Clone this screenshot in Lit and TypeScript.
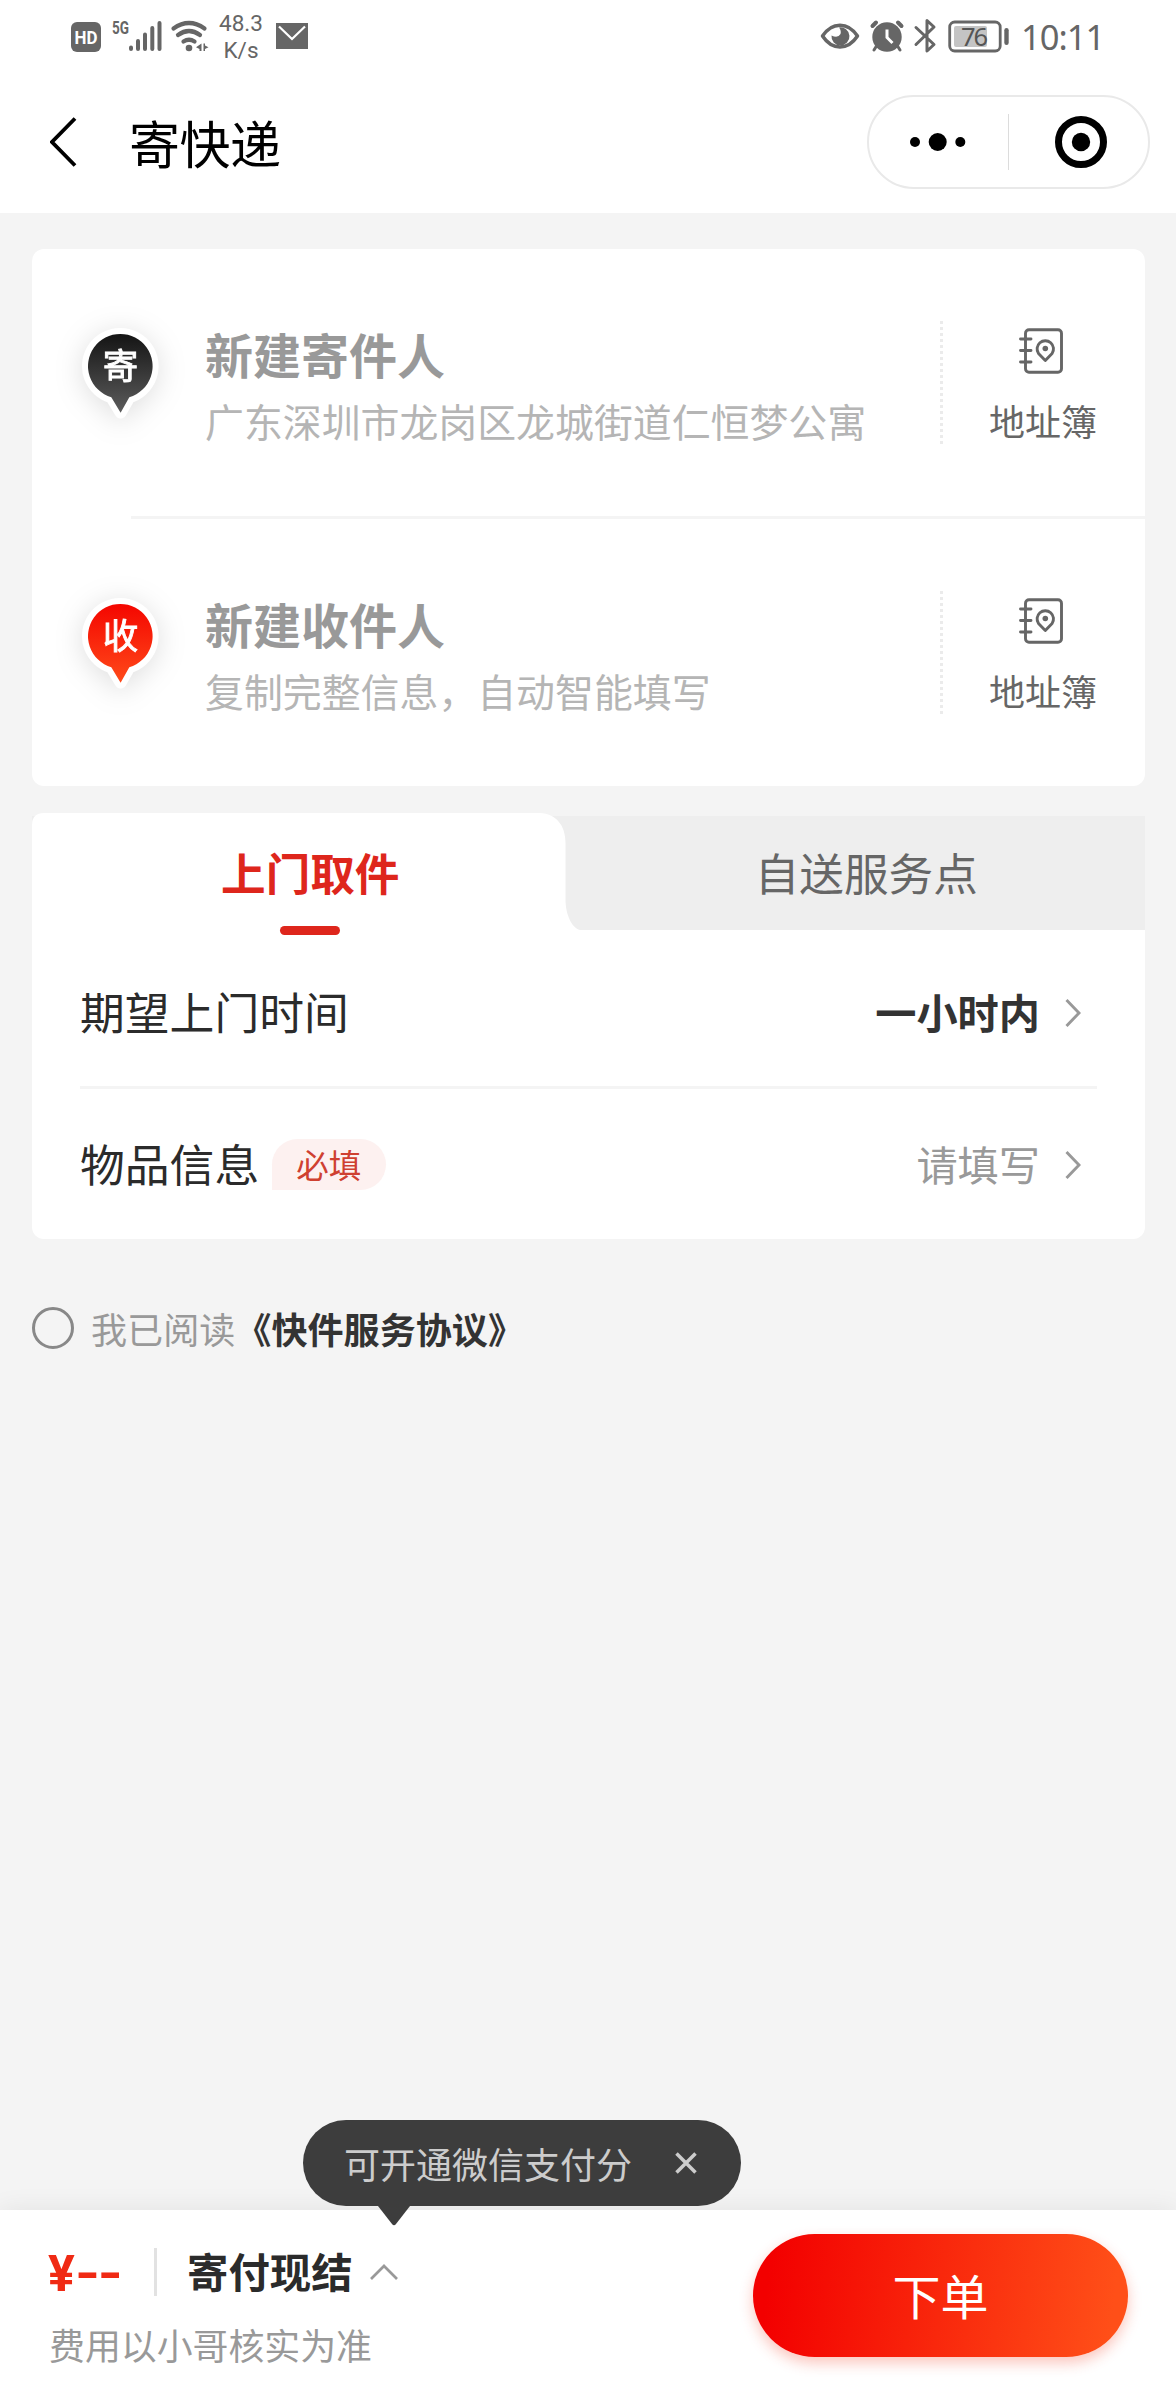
import { LitElement, html, svg, css } from "lit";
import { customElement, property } from "lit/decorators.js";

const fontStack = css`"Noto Sans CJK SC", "Noto Sans", sans-serif`;

/* ---------- Status bar ---------- */
@customElement("status-bar")
class StatusBar extends LitElement {
  static styles = css`
    :host {
      display: flex;
      height: 75px;
      box-sizing: border-box;
      padding: 0 77px 0 71px;
      justify-content: space-between;
      color: #666;
      font-family: Roboto, sans-serif;
    }
    .group { display: flex; align-items: flex-start; }
    svg { display: block; flex: none; }
    .speed {
      width: 44px;
      margin: 10px 0 0 10px;
      font-size: 22.5px;
      line-height: 27px;
      text-align: center;
      white-space: nowrap;
    }
    .mail { margin-left: 13px; }
    .clock {
      margin: 13px 0 0 12px;
      font-family: "Noto Sans", sans-serif;
      font-size: 34.5px;
      line-height: 48px;
      letter-spacing: -1px;
      width: 78px;
      white-space: nowrap;
    }
  `;

  render() {
    return html`
      <div class="group">
        <svg width="138" height="75" viewBox="71 0 138 75" fill="#666">
          <rect x="71" y="22" width="30" height="30" rx="6" />
          <text x="86" y="44" font-size="18" font-weight="700" fill="#fff" text-anchor="middle" textLength="23" lengthAdjust="spacingAndGlyphs">HD</text>
          <text x="112" y="34" font-size="18" font-weight="700" textLength="17" lengthAdjust="spacingAndGlyphs">5G</text>
          <g stroke="#666" stroke-width="4" stroke-linecap="round">
            <path d="M131 47.5V49M138 41V49M145 34.5V49M152.300 28V49M159.500 23V49" />
          </g>
          <g fill="none" stroke="#666" stroke-width="4.200" stroke-linecap="round">
            <path d="M173.500 28.500Q189 17.500 204.500 28.500" />
            <path d="M178 35Q189 27 200 35" />
            <path d="M183.500 41.500Q189 38 194.500 41.500" />
          </g>
          <circle cx="189" cy="48" r="3.300" />
          <path d="M201.500 43.500V51H199.500V49L196 47.300ZM203.500 43.500H205V45.500L208.500 47.200L205 49V51H203.500Z" />
        </svg>
        <div class="speed">48.3<br />K/s</div>
        <svg class="mail" width="32" height="75" viewBox="276 0 32 75">
          <rect x="276" y="23" width="32" height="26" fill="#666" />
          <path d="M279 26.500L292 39L305 26.500" fill="none" stroke="#fff" stroke-width="2.200" />
        </svg>
      </div>
      <div class="group">
        <svg width="189" height="75" viewBox="820 0 189 75" fill="none" stroke="#666">
          <path d="M822.500 36C832 21.500 848 21.500 857.500 36C848 50.500 832 50.500 822.500 36Z" stroke-width="3.500" stroke-linejoin="round" />
          <path d="M839 27.500A9 9 0 1 1 831.500 35.500Q838 38.500 840.500 34Q841.500 30.500 839 27.500Z" fill="#666" stroke="none" />
          <circle cx="887" cy="37" r="14.700" fill="#666" stroke="none" />
          <path d="M872.500 26L876 22.500M898 22.500L901.500 26" stroke-width="4" stroke-linecap="round" />
          <path d="M876.500 46L874 50M897.500 46L900 50" stroke-width="3" stroke-linecap="round" />
          <path d="M887 29.500V37.500L892.500 43" stroke="#fff" stroke-width="3" />
          <path d="M916 27.500L934 44.500L927 51V20.500L934 27L916 44.500" stroke-width="3" stroke-linejoin="round" stroke-linecap="round" />
          <rect x="949.700" y="22" width="50.500" height="29" rx="5" stroke-width="2.800" />
          <rect x="954" y="26" width="33" height="21" rx="2" fill="#c4c4c4" stroke="none" />
          <rect x="1004.300" y="28" width="4.400" height="17" rx="2.200" fill="#666" stroke="none" />
          <text x="974.500" y="45.500" font-family="Noto Sans" font-size="25.500" fill="#555" stroke="none" text-anchor="middle" textLength="27">76</text>
        </svg>
        <div class="clock">10:11</div>
      </div>
    `;
  }
}

/* ---------- Navigation bar ---------- */
@customElement("nav-bar")
class NavBar extends LitElement {
  static styles = css`
    :host {
      display: flex;
      height: 138px;
      box-sizing: border-box;
      padding: 20px 26px 24px 50px;
      align-items: center;
      justify-content: space-between;
      font-family: ${fontStack};
    }
    .left { display: flex; align-items: center; }
    svg { display: block; }
    .title {
      margin-left: 51px;
      margin-top: -1px;
      font-size: 51px;
      line-height: 70px;
      letter-spacing: -0.5px;
      color: #000;
    }
    .capsule {
      box-sizing: border-box;
      width: 283px;
      height: 94px;
      border: 2px solid #e9e9e9;
      border-radius: 47px;
      display: flex;
      align-items: center;
      justify-content: space-between;
      padding: 0 41px;
    }
    .line { width: 1px; height: 56px; background: #dcdcdc; margin-right: 4px; }
  `;

  render() {
    return html`
      <div class="left">
        <svg width="28" height="50" viewBox="0 0 28 50" fill="none" stroke="#000" stroke-width="3.800">
          <path d="M25 1.500L2 25L25 48.500" />
        </svg>
        <div class="title">寄快递</div>
      </div>
      <div class="capsule">
        <svg width="56" height="20" viewBox="0 0 56 20">
          <circle cx="5" cy="10" r="5" /><circle cx="27.700" cy="10" r="9" /><circle cx="50.300" cy="10" r="5" />
        </svg>
        <div class="line"></div>
        <svg width="52" height="52" viewBox="0 0 52 52">
          <circle cx="26" cy="26" r="22.500" fill="none" stroke="#000" stroke-width="7" />
          <circle cx="26" cy="26" r="9.200" />
        </svg>
      </div>
    `;
  }
}

/* ---------- Address row ---------- */
@customElement("address-row")
class AddressRow extends LitElement {
  @property() mark = "";
  @property() heading = "";
  @property() detail = "";
  @property() top = "";
  @property() bottom = "";

  static styles = css`
    :host {
      display: flex;
      height: 267px;
      align-items: flex-start;
      font-family: ${fontStack};
    }
    svg { display: block; flex: none; }
    .pin { filter: drop-shadow(0 4px 14px rgba(0, 0, 0, 0.13)); }
    .info { flex: 1; padding-top: 74px; white-space: nowrap; }
    .heading { font-size: 48px; line-height: 60px; font-weight: 700; color: #999; }
    .detail { margin-top: 12px; font-size: 38.9px; line-height: 50px; color: #b5b5b5; }
    .dots {
      width: 3px;
      height: 123px;
      margin-top: 72px;
      background: repeating-linear-gradient(#ebebeb 0 3px, transparent 3px 6px);
    }
    .book {
      box-sizing: border-box;
      width: 202px;
      padding-top: 79px;
      padding-right: 2px;
      display: flex;
      flex-direction: column;
      align-items: center;
      gap: 24px;
      font-size: 36px;
      line-height: 44px;
      color: #666;
    }
    .book svg { margin-right: 5px; }
  `;

  render() {
    return html`
      <svg class="pin" width="173" height="200" viewBox="0.700 0 173 200">
        <defs>
          <linearGradient id="fill" x1="0" y1="0" x2="0" y2="1">
            <stop offset="0" stop-color=${this.top} />
            <stop offset="1" stop-color=${this.bottom} />
          </linearGradient>
        </defs>
        <path
          d="M80 148.200A32.300 32.300 0 1 1 98 148.200L89.300 163.500Z"
          fill="#fff" stroke="#fff" stroke-width="12" stroke-linejoin="round"
        />
        <path d="M80 148.200A32.300 32.300 0 1 1 98 148.200L89.300 163.700Z" fill="url(#fill)" />
        <text x="89.300" y="129.500" font-size="35.500" fill="#fff" stroke="#fff" stroke-width="0.900" text-anchor="middle">${this.mark}</text>
      </svg>
      <div class="info">
        <div class="heading">${this.heading}</div>
        <div class="detail">${this.detail}</div>
      </div>
      <div class="dots"></div>
      <div class="book">
        <svg width="44" height="46" viewBox="0 0 44 46" fill="none" stroke="#666" stroke-width="2.900" stroke-linecap="round">
          <rect x="6.500" y="1.700" width="36" height="42.500" rx="3.500" />
          <path d="M1.500 11H12M1.500 22.500H12M1.500 34H12" />
          <path d="M26.300 32.500L19.500 25.500A8.200 8.200 0 1 1 33.100 25.500Z" stroke-linejoin="round" />
          <circle cx="26.300" cy="20.500" r="2.800" fill="#666" stroke="none" />
        </svg>
        <div>地址簿</div>
      </div>
    `;
  }
}

/* ---------- Page ---------- */
const chevron = html`
  <svg class="chevron" width="16" height="28" viewBox="0 0 16 28" fill="none" stroke="#999" stroke-width="2.900">
    <path d="M1.500 1L14 14L1.500 27" />
  </svg>
`;

@customElement("app-root")
class AppRoot extends LitElement {
  static styles = css`
    :host {
      display: flex;
      flex-direction: column;
      width: 1176px;
      height: 2400px;
      background: #f4f4f4;
      overflow: hidden;
      font-family: ${fontStack};
    }
    svg { display: block; flex: none; }
    .top { background: #fff; }
    .main { flex: 1; padding: 36px 31px 0 32px; }
    .card { background: #fff; border-radius: 12px; }
    .card .rule { height: 3px; background: #f4f4f4; margin-left: 99px; }

    .service { margin-top: 27px; }
    .tabs { display: grid; grid-template-columns: 1fr 1fr; height: 117px; }
    .shape { grid-area: 1 / 1 / 2 / 3; }
    .tab {
      grid-row: 1;
      z-index: 1;
      padding-top: 29px;
      display: flex;
      flex-direction: column;
      align-items: center;
      gap: 24px;
      font-size: 44.6px;
      line-height: 60px;
      color: #666;
    }
    .first { grid-column: 1; }
    .second { grid-column: 2; padding-right: 1px; }
    .active { color: #de261c; font-weight: 700; }
    .bar { width: 60px; height: 9px; border-radius: 5px; background: #de261c; }
    .body { background: #fff; border-radius: 0 0 12px 12px; padding: 0 48px; }
    .row { display: flex; align-items: center; padding-right: 16px; box-sizing: border-box; }
    .when { height: 156px; padding-top: 5px; }
    .goods { height: 150px; padding-bottom: 3px; }
    .line { height: 3px; background: #f4f4f4; }
    .label { font-size: 44.8px; line-height: 60px; color: #2b2b2b; }
    .badge {
      margin: 4px 0 0 13px;
      width: 114px;
      height: 51px;
      border-radius: 25.500px 25.500px 25.500px 0;
      background: #fdf1f0;
      color: #cf4030;
      font-size: 32.500px;
      line-height: 49px;
      text-align: center;
      text-indent: -1px;
    }
    .value { margin-left: auto; font-size: 41.2px; line-height: 60px; color: #999; }
    .strong { font-weight: 700; color: #333; }
    .chevron { padding-top: 5px; margin-left: 25px; }

    .agree {
      margin-top: 68px;
      display: flex;
      align-items: center;
      height: 42px;
      font-size: 36.100px;
      line-height: 40px;
      color: #999;
      white-space: nowrap;
    }
    .circle { box-sizing: border-box; width: 42px; height: 42px; border: 3px solid #888; border-radius: 50%; margin-right: 17px; }
    .agree span, .agree b { margin-top: -1px; }
    .agree b { color: #333; font-weight: 700; }

    .footer {
      position: relative;
      height: 190px;
      box-sizing: border-box;
      padding: 24px 48px 0 48px;
      background: #fff;
      box-shadow: 0 0 24px rgba(0, 0, 0, 0.08);
      display: flex;
      justify-content: space-between;
      align-items: flex-start;
    }
    .pay { display: flex; align-items: center; height: 76px; }
    .price { width: 106px; display: flex; align-items: center; padding-top: 3px; font-family: Roboto, sans-serif; font-size: 50px; font-weight: 700; color: #f02a14; white-space: nowrap; }
    .dash { display: inline-block; transform: scaleX(1.28); transform-origin: left; letter-spacing: -1.900px; }
    .bar2 { width: 3px; height: 48px; background: #e2e2e2; }
    .method { margin-left: 30px; font-size: 41.400px; line-height: 60px; font-weight: 700; color: #2b2b2b; margin-top: -4px; }
    .caret { margin-left: 17px; }
    .note { font-size: 35.900px; line-height: 48px; margin: 10px 0 0 1px; color: #999; }
    .submit {
      width: 375px;
      height: 123px;
      border-radius: 62px;
      background: linear-gradient(96deg, #f30000 5%, #ff4f18 95%);
      box-shadow: 0 6px 14px rgba(240, 50, 20, 0.28);
      color: #fff;
      font-size: 48px;
      line-height: 120px;
      text-align: center;
    }
    .tip {
      position: absolute;
      left: 303px;
      top: -90px;
      width: 438px;
      height: 86px;
      box-sizing: border-box;
      border-radius: 43px;
      background: #3d3d3d;
      color: #ccc;
      font-size: 36px;
      line-height: 84px;
      padding-left: 41px;
      display: flex;
      align-items: center;
      gap: 43px;
      white-space: nowrap;
    }
    .tail { position: absolute; left: 75px; top: 86px; }
  `;

  render() {
    return html`
      <div class="top">
        <status-bar></status-bar>
        <nav-bar></nav-bar>
      </div>
      <div class="main">
        <div class="card">
          <address-row
            mark="寄" heading="新建寄件人" detail="广东深圳市龙岗区龙城街道仁恒梦公寓"
            top="#141414" bottom="#5c5c5c"
          ></address-row>
          <div class="rule"></div>
          <address-row
            mark="收" heading="新建收件人" detail="复制完整信息，自动智能填写"
            top="#f40600" bottom="#ff4a1a"
          ></address-row>
        </div>

        <div class="service">
          <div class="tabs">
            <svg class="shape" width="1113" height="117" viewBox="0 0 1113 117">
              <rect y="3" width="1113" height="114" fill="#eee" />
              <path d="M0 117V12Q0 0 12 0H508C524 1 533.500 12 533.500 30V86C533.500 102 540 115 548 117Z" fill="#fff" />
            </svg>
            <div class="tab first active"><span>上门取件</span><div class="bar"></div></div>
            <div class="tab second">自送服务点</div>
          </div>
          <div class="body">
            <div class="row when">
              <span class="label">期望上门时间</span>
              <span class="value strong">一小时内</span>${chevron}
            </div>
            <div class="line"></div>
            <div class="row goods">
              <span class="label">物品信息</span><span class="badge">必填</span>
              <span class="value">请填写</span>${chevron}
            </div>
          </div>
        </div>

        <div class="agree">
          <div class="circle"></div>
          <span>我已阅读</span><b>《快件服务协议》</b>
        </div>
      </div>

      <div class="footer">
        <div>
          <div class="pay">
            <span class="price">¥<span class="dash">--</span></span>
            <div class="bar2"></div>
            <span class="method">寄付现结</span>
            <svg class="caret" width="28" height="16" viewBox="0 0 28 16" fill="none" stroke="#999" stroke-width="2.700">
              <path d="M1 15L14 2L27 15" />
            </svg>
          </div>
          <div class="note">费用以小哥核实为准</div>
        </div>
        <div class="submit">下单</div>
        <div class="tip">
          <span>可开通微信支付分</span>
          <svg width="22" height="22" viewBox="0 0 22 22" stroke="#ccc" stroke-width="3.500">
            <path d="M1.500 1.500L20.500 20.500M20.500 1.500L1.500 20.500" />
          </svg>
          <svg class="tail" width="32" height="20" viewBox="0 0 32 20">
            <path d="M0 0H32L18 18Q16 20.500 14 18Z" fill="#3d3d3d" />
          </svg>
        </div>
      </div>
    `;
  }
}
